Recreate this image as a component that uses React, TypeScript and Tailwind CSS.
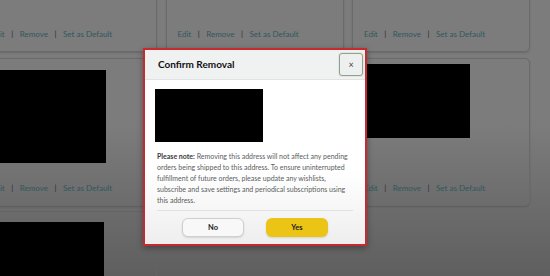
const FONT = { fontFamily: 'Lato, "Liberation Sans", sans-serif' };

type Card = { box?: { top: number; left: number; w: number; h: number }; links: boolean };

const rows: Card[][] = [
  [{ links: true }, { links: true }, { links: true }],
  [
    { links: true, box: { top: 11, left: 10, w: 116, h: 93 } },
    // sits fully behind the modal
    { links: false, box: { top: 11, left: 12, w: 108, h: 80 } },
    { links: true, box: { top: 5, left: 10, w: 107, h: 74 } },
  ],
];

function Links() {
  return (
    <div className="flex items-center gap-[6.5px] text-[8px] leading-[11px] text-[#2f585c]">
      <span>Edit</span>
      <span className="text-[#2b2b2b]">|</span>
      <span>Remove</span>
      <span className="text-[#2b2b2b]">|</span>
      <span>Set as Default</span>
    </div>
  );
}

function AddressCard({ card }: { card: Card }) {
  return (
    <div className="relative h-[148px] rounded-[5px] border border-[#6a6a6a] shadow-[0_1px_2px_rgba(0,0,0,0.15)] flex flex-col justify-end px-[11px] pb-[11px]">
      {card.box && (
        <div
          className="absolute bg-black"
          style={{ top: card.box.top, left: card.box.left, width: card.box.w, height: card.box.h }}
        />
      )}
      {card.links && <Links />}
    </div>
  );
}

export default function App() {
  return (
    <div
      className="relative w-[550px] h-[276px] overflow-hidden bg-linear-to-b from-[#7c7c7c] from-45% to-[#5f5f5f]"
      style={FONT}
    >
      <div className="-ml-[21px] -mt-[96px] grid grid-cols-[178px_178px_178px] gap-x-[8.5px] gap-y-[5.5px]">
        {rows.flat().map((card, i) => (
          <AddressCard key={i} card={card} />
        ))}
        <div className="relative h-[148px] rounded-[5px] border border-[#636363]">
          <div className="absolute left-[10px] top-[10px] w-[114px] h-[80px] bg-black" />
        </div>
      </div>

      {/* modal */}
      <div className="absolute left-[143px] top-[48px] w-[224px] h-[198px] border-2 border-[#c62a2e] bg-white shadow-[0_2px_6px_rgba(0,0,0,0.35)] flex flex-col overflow-hidden">
        <div className="h-[30px] flex-shrink-0 bg-[#f0f2f2] border-b border-[#e0e3e3] flex justify-between pl-[13px] pr-[2px]">
          <h2 className="self-center text-[10px] font-bold text-[#111]">Confirm Removal</h2>
          <button className="mt-[3px] w-[24px] h-[23px] rounded-[3px] border border-[#86a39f] bg-[#eef0f0] shadow-[0_0_0_1px_rgba(230,200,150,0.35)] flex items-center justify-center text-[9px] leading-none text-[#444]">
            ×
          </button>
        </div>
        <div className="flex-1 bg-linear-to-b from-white from-55% to-[#eeeeee] px-3 pt-[9px]">
          <div className="-ml-[2px] w-[108px] h-[53px] bg-black" />
          <p className="mt-[8.5px] text-[7px] leading-[11px] text-[#5a5d5d] whitespace-nowrap">
            <b className="text-[#3a3a3a]">Please note:</b> Removing this address will not affect any pending
            <br />
            orders being shipped to this address. To ensure uninterrupted
            <br />
            fulfillment of future orders, please update any wishlists,
            <br />
            subscribe and save settings and periodical subscriptions using
            <br />
            this address.
          </p>
          <div className="mt-[4.5px] border-t border-[#e2e2e2]" />
          <div className="mt-[7px] flex justify-center gap-[22px]">
            <button className="w-[62px] h-[19px] rounded-[6px] border border-[#cfcfcf] bg-[#f8f8f8] shadow-[0_1px_2px_rgba(0,0,0,0.12)] text-[7.5px] font-bold text-[#222]">
              No
            </button>
            <button className="w-[62px] h-[19px] rounded-[6px] bg-[#ebc415] shadow-[0_1px_2px_rgba(0,0,0,0.12)] text-[7.5px] font-bold text-[#222]">
              Yes
            </button>
          </div>
        </div>
      </div>
    </div>
  );
}
